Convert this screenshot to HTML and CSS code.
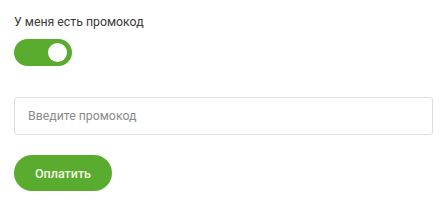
FILE: index.html
```
<!DOCTYPE html>
<html>
    <head>
        <meta charset="utf-8">
        <link rel="stylesheet" href="styles.css">
    </head>
    <body>
        <div class="promo">
            <label class="title">У меня есть промокод</label>
            <div class="toggle on"><span class="knob"></span></div>
            <input class="code" placeholder="Введите промокод"/>
            <button class="pay">Оплатить</button>
        </div>
    </body>
</html>
```

FILE: styles.css
```
* { margin: 0; padding: 0; box-sizing: border-box; font-family: Roboto, sans-serif; }
html, body { width: 100%; height: 100%; background: #ffffff; }
body { padding: 14px 15px 0 14px; }

.promo { display: flex; flex-direction: column; align-items: flex-start; }
.promo .title { font-size: 12.3px; line-height: 16px; color: #3a3a3a; }
.promo .toggle { width: 58px; height: 27px; border-radius: 14px; background: #5aac2e; margin-top: 9px; display: flex; align-items: center; justify-content: flex-end; padding-right: 5px; }
.promo .toggle .knob { width: 19px; height: 19px; border-radius: 50%; background: #ffffff; }
.promo .code { width: 100%; height: 38px; margin-top: 31px; border: 1px solid #dcdcdc; border-radius: 3px; padding: 0 13px; font-size: 12.3px; color: #333333; outline: none; }
.promo .code::placeholder { color: #8a8a8a; }
.promo .pay { margin-top: 20px; width: 98px; height: 36px; border: none; border-radius: 18px; background: #5aac2e; color: #f4f8e8; font-size: 12.5px; font-weight: 500; cursor: pointer; }
```
